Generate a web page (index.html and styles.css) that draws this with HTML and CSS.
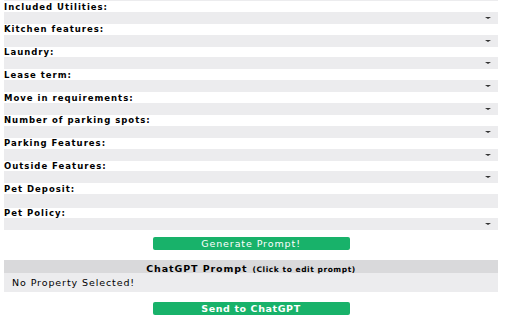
FILE: index.html
```html
<!DOCTYPE html>
<html>
<head>
<meta charset="utf-8">
<link rel="stylesheet" href="styles.css">
</head>
<body>
<div class="page">
  <div class="tail"></div>
  <div class="field"><div class="label">Included Utilities:</div><div class="select"><span class="arrow"></span></div></div>
  <div class="field"><div class="label">Kitchen features:</div><div class="select"><span class="arrow"></span></div></div>
  <div class="field"><div class="label">Laundry:</div><div class="select"><span class="arrow"></span></div></div>
  <div class="field"><div class="label">Lease term:</div><div class="select"><span class="arrow"></span></div></div>
  <div class="field"><div class="label">Move in requirements:</div><div class="select"><span class="arrow"></span></div></div>
  <div class="field"><div class="label">Number of parking spots:</div><div class="select"><span class="arrow"></span></div></div>
  <div class="field"><div class="label">Parking Features:</div><div class="select"><span class="arrow"></span></div></div>
  <div class="field"><div class="label">Outside Features:</div><div class="select"><span class="arrow"></span></div></div>
  <div class="field"><div class="label">Pet Deposit:</div><div class="select input"></div></div>
  <div class="field"><div class="label">Pet Policy:</div><div class="select"><span class="arrow"></span></div></div>
  <div class="btn-row"><button class="btn">Generate Prompt!</button></div>
  <div class="prompt">
    <div class="prompt-head"><b class="big">ChatGPT Prompt</b> <b class="small">(Click to edit prompt)</b></div>
    <div class="prompt-body">No Property Selected!</div>
  </div>
  <div class="btn-row send"><button class="btn bold">Send to ChatGPT</button></div>
</div>
</body>
</html>
```
FILE: styles.css
```css
html, body {
  margin: 0;
  padding: 0;
  background: #ffffff;
}
.page {
  width: 494px;
  padding-left: 4px;
  font-family: "DejaVu Sans", sans-serif;
  color: #000;
}
.tail {
  height: 1px;
  background: #ececee;
}
.field {
  display: flex;
  flex-direction: column;
}
.label {
  height: 10.8px;
  font-size: 8.5px;
  font-weight: bold;
  letter-spacing: 1px;
  line-height: 10px;
  padding-top: 0.5px;
  box-sizing: border-box;
  white-space: nowrap;
}
.select {
  position: relative;
  height: 12px;
  background: #ececee;
}
.select.input {
  height: 13.5px;
}
.arrow {
  position: absolute;
  right: 7px;
  top: 5px;
  width: 0;
  height: 0;
  border-left: 3px solid transparent;
  border-right: 3px solid transparent;
  border-top: 2.5px solid #333;
}
.btn-row {
  display: flex;
  justify-content: center;
  padding-top: 7px;
}
.btn {
  width: 197px;
  height: 13px;
  background: #18b26a;
  color: #fff;
  border: none;
  border-radius: 2px;
  font-family: "DejaVu Sans", sans-serif;
  font-size: 9.5px;
  letter-spacing: 0.9px;
  line-height: 13px;
  padding: 0;
}
.btn.bold {
  font-weight: bold;
  font-size: 9.5px;
  letter-spacing: 0.6px;
}
.prompt {
  margin-top: 10px;
}
.prompt-head {
  height: 13px;
  background: #d9d9db;
  text-align: center;
  line-height: 13px;
  white-space: nowrap;
}
.big {
  font-size: 9.5px;
  letter-spacing: 0.9px;
}
.small {
  font-size: 7.5px;
  letter-spacing: 0.55px;
}
.prompt-body {
  height: 19px;
  background: #ececee;
  font-size: 9.5px;
  letter-spacing: 0.9px;
  line-height: 19px;
  padding-left: 8px;
}
.send {
  padding-top: 10px;
}
```
